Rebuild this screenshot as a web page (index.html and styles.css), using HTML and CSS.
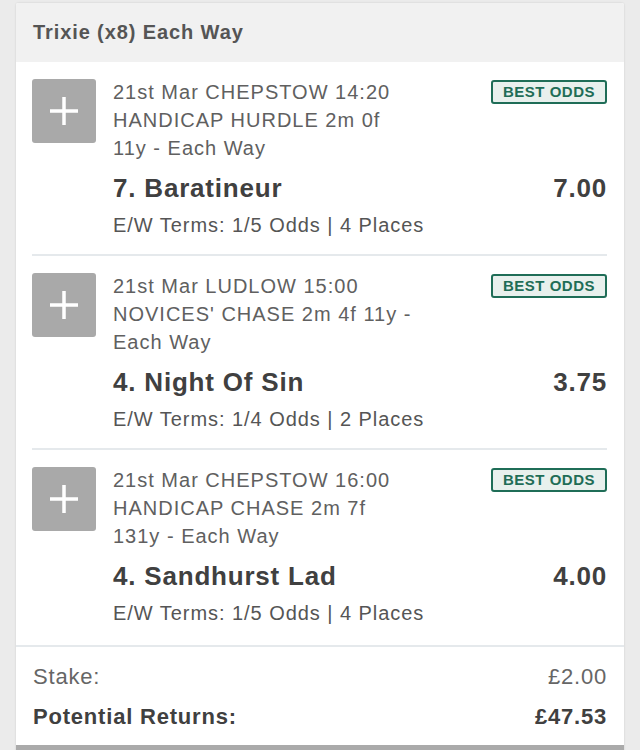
FILE: index.html
```html
<!DOCTYPE html>
<html lang="en">
<head>
    <meta charset="UTF-8">
    <meta name="viewport" content="width=device-width, initial-scale=1.0">
    <title>Trixie Bet Slip</title>
    <link rel="stylesheet" href="styles.css">
</head>
<body>
    <div class="slip">
        <div class="slip-header">Trixie (x8) Each Way</div>

        <div class="legs">
            <div class="leg">
                <div class="leg-add">
                    <svg width="28" height="28" viewBox="0 0 28 28"><path d="M14 0v28M0 14h28" stroke="#fff" stroke-width="3.5"/></svg>
                </div>
                <div class="leg-body">
                    <div class="leg-top">
                        <div class="race">21st Mar CHEPSTOW 14:20 HANDICAP HURDLE 2m 0f 11y - Each Way</div>
                        <span class="badge">BEST ODDS</span>
                    </div>
                    <div class="selection">
                        <span>7. Baratineur</span>
                        <span>7.00</span>
                    </div>
                    <div class="terms">E/W Terms: 1/5 Odds | 4 Places</div>
                </div>
            </div>

            <div class="leg">
                <div class="leg-add">
                    <svg width="28" height="28" viewBox="0 0 28 28"><path d="M14 0v28M0 14h28" stroke="#fff" stroke-width="3.5"/></svg>
                </div>
                <div class="leg-body">
                    <div class="leg-top">
                        <div class="race">21st Mar LUDLOW 15:00 NOVICES' CHASE 2m 4f 11y - Each Way</div>
                        <span class="badge">BEST ODDS</span>
                    </div>
                    <div class="selection">
                        <span>4. Night Of Sin</span>
                        <span>3.75</span>
                    </div>
                    <div class="terms">E/W Terms: 1/4 Odds | 2 Places</div>
                </div>
            </div>

            <div class="leg">
                <div class="leg-add">
                    <svg width="28" height="28" viewBox="0 0 28 28"><path d="M14 0v28M0 14h28" stroke="#fff" stroke-width="3.5"/></svg>
                </div>
                <div class="leg-body">
                    <div class="leg-top">
                        <div class="race">21st Mar CHEPSTOW 16:00 HANDICAP CHASE 2m 7f 131y - Each Way</div>
                        <span class="badge">BEST ODDS</span>
                    </div>
                    <div class="selection">
                        <span>4. Sandhurst Lad</span>
                        <span>4.00</span>
                    </div>
                    <div class="terms">E/W Terms: 1/5 Odds | 4 Places</div>
                </div>
            </div>
        </div>

        <div class="summary">
            <div class="summary-row">
                <span>Stake:</span>
                <span>£2.00</span>
            </div>
            <div class="summary-row total">
                <span>Potential Returns:</span>
                <span>£47.53</span>
            </div>
        </div>
        <div class="slip-footer"></div>
    </div>
</body>
</html>
```

FILE: styles.css
```css
/* Basic Styling */
body {
    font-family: "Liberation Sans", Arial, Helvetica, sans-serif;
    margin: 0;
    padding: 3px 16px 0;
    background-color: #ebebeb;
    color: #444;
}
.slip {
    background-color: #ffffff;
    border-radius: 2px;
    box-shadow: 0 0 2px rgba(0, 0, 0, 0.15);
    overflow: hidden;
}
.slip-header {
    background-color: #f1f1f1;
    color: #555;
    font-size: 20px;
    font-weight: bold;
    line-height: 28px;
    letter-spacing: 0.9px;
    padding: 15px 17px 16px;
}

/* Each leg of the bet */
.leg {
    display: flex;
    gap: 17px;
    margin: 0 17px 0 16px;
    padding: 16px 0 15px;
    border-bottom: 2px solid #e5e9ec;
}
.leg:last-child {
    border-bottom: none;
    padding-bottom: 18px;
}
.leg-add {
    flex: none;
    width: 64px;
    height: 64px;
    margin-top: 1px;
    background-color: #a9a9a9;
    border-radius: 3px;
    display: flex;
    align-items: center;
    justify-content: center;
}
.leg-body {
    flex: 1;
}
.leg-top {
    display: flex;
    justify-content: space-between;
    align-items: flex-start;
}
.race {
    max-width: 304px;
    font-size: 20px;
    line-height: 28px;
    letter-spacing: 1px;
    color: #606060;
}
.badge {
    margin-top: 2px;
    padding: 0 10px;
    height: 20px;
    line-height: 20px;
    border: 2px solid #1f6d57;
    border-radius: 3px;
    background-color: #e8f0ed;
    color: #1f6d57;
    font-size: 15px;
    font-weight: bold;
    letter-spacing: 0.5px;
}
.selection {
    display: flex;
    justify-content: space-between;
    margin-top: 9px;
    font-size: 26px;
    line-height: 34px;
    font-weight: bold;
    letter-spacing: 0.8px;
    color: #404040;
}
.terms {
    margin-top: 6px;
    font-size: 20px;
    line-height: 28px;
    letter-spacing: 0.95px;
    color: #555;
}

/* Stake and returns */
.summary {
    border-top: 2px solid #e5e9ec;
    padding: 15px 17px 13px;
}
.summary-row {
    display: flex;
    justify-content: space-between;
    font-size: 22px;
    line-height: 30px;
    letter-spacing: 0.8px;
    color: #666;
}
.summary-row.total {
    margin-top: 10px;
    font-weight: bold;
    color: #404040;
}
.slip-footer {
    height: 10px;
    background-color: #aaaaaa;
}
```
